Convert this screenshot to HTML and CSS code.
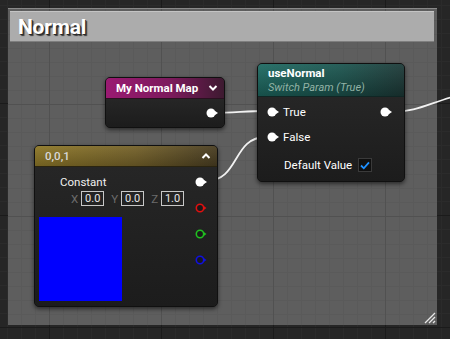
FILE: index.html
```html
<!DOCTYPE html>
<html>
<head>
<meta charset="utf-8">
<link rel="stylesheet" href="styles.css">
</head>
<body>
<div class="canvas">
  <div class="comment">
    <div class="comment-title">Normal</div>
    <div class="comment-body"></div>
    <svg class="grip" width="14" height="14" viewBox="0 0 14 14">
      <path d="M13 3 L3 13 M13 7 L7 13 M13 11 L11 13" stroke="#e8e8e8" stroke-width="1.3" fill="none"/>
    </svg>
  </div>

  <svg class="wires" width="450" height="339" viewBox="0 0 450 339">
    <path d="M212 113 C235 113 245 111 266 111" />
    <path d="M206 181 C240 181 232 137 266 137" />
    <path d="M391 112 C415 112 428 104 452 97" />
  </svg>

  <div class="node node-map">
    <div class="head head-map">
      <span class="title">My Normal Map</span>
      <svg class="chev" width="10" height="8" viewBox="0 0 10 8"><path d="M1.5 2 L5 5.5 L8.5 2" stroke="#fff" stroke-width="2" fill="none"/></svg>
    </div>
    <div class="body body-map">
      <svg class="pin" width="12" height="10" viewBox="0 0 12 10"><circle cx="5" cy="5" r="4.5" fill="#fff"/><path d="M9 3 L12 5 L9 7 Z" fill="#fff"/></svg>
    </div>
  </div>

  <div class="node node-switch">
    <div class="head head-switch">
      <div class="title">useNormal</div>
      <div class="subtitle">Switch Param (True)</div>
    </div>
    <div class="body body-switch">
      <div class="row">
        <div class="pinlabel">
          <svg class="pin" width="12" height="10" viewBox="0 0 12 10"><circle cx="5" cy="5" r="4.5" fill="#fff"/><path d="M9 3 L12 5 L9 7 Z" fill="#fff"/></svg>
          <span>True</span>
        </div>
        <svg class="pin" width="12" height="10" viewBox="0 0 12 10"><circle cx="5" cy="5" r="4.5" fill="#fff"/><path d="M9 3 L12 5 L9 7 Z" fill="#fff"/></svg>
      </div>
      <div class="row">
        <div class="pinlabel">
          <svg class="pin" width="12" height="10" viewBox="0 0 12 10"><circle cx="5" cy="5" r="4.5" fill="#fff"/><path d="M9 3 L12 5 L9 7 Z" fill="#fff"/></svg>
          <span>False</span>
        </div>
      </div>
      <div class="row row-default">
        <span>Default Value</span>
        <span class="check">
          <svg width="10" height="9" viewBox="0 0 10 9"><path d="M1 4.5 L3.8 7.3 L9 1.3" stroke="#1e90ff" stroke-width="1.8" fill="none"/></svg>
        </span>
      </div>
    </div>
  </div>

  <div class="node node-const">
    <div class="head head-const">
      <span class="title light">0,0,1</span>
      <svg class="chev" width="10" height="8" viewBox="0 0 10 8"><path d="M1.5 6 L5 2.5 L8.5 6" stroke="#fff" stroke-width="2" fill="none"/></svg>
    </div>
    <div class="body body-const">
      <div class="const-left">
        <div class="const-label">Constant</div>
        <div class="xyz">
          <span class="axis">X</span><span class="val">0.0</span>
          <span class="axis">Y</span><span class="val">0.0</span>
          <span class="axis">Z</span><span class="val">1.0</span>
        </div>
        <div class="swatch"></div>
      </div>
      <div class="const-pins">
        <svg class="pin" width="12" height="10" viewBox="0 0 12 10"><circle cx="5" cy="5" r="4.5" fill="#fff"/><path d="M9 3 L12 5 L9 7 Z" fill="#fff"/></svg>
        <svg class="pin" width="12" height="10" viewBox="0 0 12 10"><circle cx="5" cy="5" r="3.7" fill="#1a1a1a" stroke="#e01010" stroke-width="1.6"/><path d="M9 3.3 L11.5 5 L9 6.7 Z" fill="#e01010"/></svg>
        <svg class="pin" width="12" height="10" viewBox="0 0 12 10"><circle cx="5" cy="5" r="3.7" fill="#1a1a1a" stroke="#20c020" stroke-width="1.6"/><path d="M9 3.3 L11.5 5 L9 6.7 Z" fill="#20c020"/></svg>
        <svg class="pin" width="12" height="10" viewBox="0 0 12 10"><circle cx="5" cy="5" r="3.7" fill="#1a1a1a" stroke="#1010e0" stroke-width="1.6"/><path d="M9 3.3 L11.5 5 L9 6.7 Z" fill="#1010e0"/></svg>
      </div>
    </div>
  </div>
</div>
</body>
</html>
```

FILE: styles.css
```css
* { box-sizing: border-box; }
html, body { margin: 0; padding: 0; }
body {
  width: 450px;
  height: 339px;
  overflow: hidden;
  font-family: Roboto, "Liberation Sans", sans-serif;
  background-color: #262626;
  background-image:
    linear-gradient(to right, #1b1b1b 0 1px, transparent 1px),
    linear-gradient(to bottom, #1b1b1b 0 1px, transparent 1px),
    linear-gradient(to right, #2b2b2b 0 1px, transparent 1px),
    linear-gradient(to bottom, #2b2b2b 0 1px, transparent 1px);
  background-size: 112px 112px, 112px 112px, 14px 14px, 14px 14px;
  background-position: 49px 0, 0 103px, 7px 0, 0 5px;
}
.canvas {
  position: relative;
  width: 450px;
  height: 339px;
}
.comment {
  position: absolute;
  left: 8px;
  top: 8px;
  width: 429px;
  height: 317px;
  display: flex;
  flex-direction: column;
  padding: 2px 3px 0 2px;
  background-color: #5e5e5e;
  background-image:
    linear-gradient(to right, #515151 0 1px, transparent 1px),
    linear-gradient(to bottom, #515151 0 1px, transparent 1px),
    linear-gradient(to right, #5a5a5a 0 1px, transparent 1px),
    linear-gradient(to bottom, #5a5a5a 0 1px, transparent 1px);
  background-size: 112px 112px, 112px 112px, 14px 14px, 14px 14px;
  background-position: 41px 0, 0 95px, 13px 0, 0 11px;
  border-top: 1px solid #8a8a8a;
}
.comment-title {
  height: 31px;
  background: #acacac;
  border-top: 1px solid #c4c4c4;
  border-bottom: 1px solid #7e7e7e;
  color: #ffffff;
  font-weight: 700;
  font-size: 21px;
  line-height: 30px;
  padding-left: 8px;
  letter-spacing: -0.2px;
  text-shadow: 1px 1px 0 #2a2a2a, 2px 2px 1px #3a3a3a;
}
.comment-body { flex: 1; }
.grip {
  position: absolute;
  right: 1px;
  bottom: 1px;
}
.wires {
  position: absolute;
  left: 0;
  top: 0;
}
.wires path {
  fill: none;
  stroke: #f2f2f2;
  stroke-width: 1.8;
}
.node {
  position: absolute;
  display: flex;
  flex-direction: column;
  border-radius: 5px;
  overflow: hidden;
  background: #1e1e1e;
  border: 1px solid #101010;
  box-shadow: 0 2px 4px rgba(0,0,0,0.55);
  color: #fff;
  font-size: 11px;
}
.head {
  display: flex;
  align-items: center;
  justify-content: space-between;
  padding: 0 6px 0 10px;
  flex: none;
}
.title {
  font-weight: 700;
  font-size: 11.5px;
  color: #ffffff;
}
.title.light { color: #d8d8d8; font-weight: 500; }
.body {
  flex: 1;
  background: linear-gradient(to bottom, #262626, #1c1c1c);
}
.node-map { left: 105px; top: 77px; width: 120px; height: 51px; }
.head-map {
  height: 21px;
  background: linear-gradient(to right, #9a1a72 0%, #7c1a5c 55%, #3d1a30 100%);
  border-bottom: 1px solid #2a1020;
}
.body-map {
  display: flex;
  justify-content: flex-end;
  align-items: center;
  padding-right: 6px;
}
.node-switch { left: 257px; top: 63px; width: 148px; height: 119px; }
.head-switch {
  height: 33px;
  flex-direction: column;
  align-items: flex-start;
  justify-content: center;
  gap: 1px;
  padding: 0 10px;
  background: linear-gradient(to bottom, rgba(255,255,255,0.06), rgba(0,0,0,0.25)), linear-gradient(to right, #1e6a62 0%, #1c5650 55%, #1d3a38 100%);
  border-bottom: 1px solid #102624;
}
.subtitle {
  font-style: italic;
  font-size: 11px;
  color: #92b3a6;
}
.body-switch {
  display: flex;
  flex-direction: column;
  padding: 2px 12px 0 9px;
}
.row {
  height: 25px;
  flex: none;
  display: flex;
  align-items: center;
  justify-content: space-between;
  font-size: 11.5px;
}
.pinlabel {
  display: flex;
  align-items: center;
  gap: 4px;
}
.row-default {
  justify-content: flex-start;
  padding-left: 17px;
  gap: 6px;
  height: 32px;
}
.check {
  width: 14px;
  height: 14px;
  background: #101010;
  border: 1px solid #3a3a3a;
  display: flex;
  align-items: center;
  justify-content: center;
}
.node-const { left: 34px; top: 145px; width: 184px; height: 162px; }
.head-const {
  height: 21px;
  background: linear-gradient(to bottom, rgba(255,255,255,0.05), rgba(0,0,0,0.2)), linear-gradient(to right, #8e7828 0%, #75622a 55%, #4a3e22 100%);
  border-bottom: 1px solid #2a2410;
}
.body-const {
  display: flex;
  justify-content: space-between;
  padding: 8px 10px 0 4px;
}
.const-left {
  display: flex;
  flex-direction: column;
}
.const-label {
  padding-left: 21px;
  line-height: 14px;
  color: #f0f0f0;
  font-size: 11.5px;
}
.xyz {
  display: flex;
  align-items: center;
  margin-top: 2px;
  padding-left: 32px;
  gap: 3px;
}
.axis {
  color: #6c6c6c;
  font-size: 11.5px;
  margin-left: 4px;
}
.axis:first-child { margin-left: 0; }
.val {
  border: 1px solid #c8c8c8;
  color: #e6e6e6;
  font-size: 11px;
  height: 15px;
  line-height: 13px;
  padding: 0 2px;
  width: 23px;
  text-align: center;
}
.swatch {
  margin-top: 11px;
  width: 83px;
  height: 84px;
  background: #0000ff;
}
.const-pins {
  display: flex;
  flex-direction: column;
  gap: 16px;
  padding-top: 2px;
}
```
